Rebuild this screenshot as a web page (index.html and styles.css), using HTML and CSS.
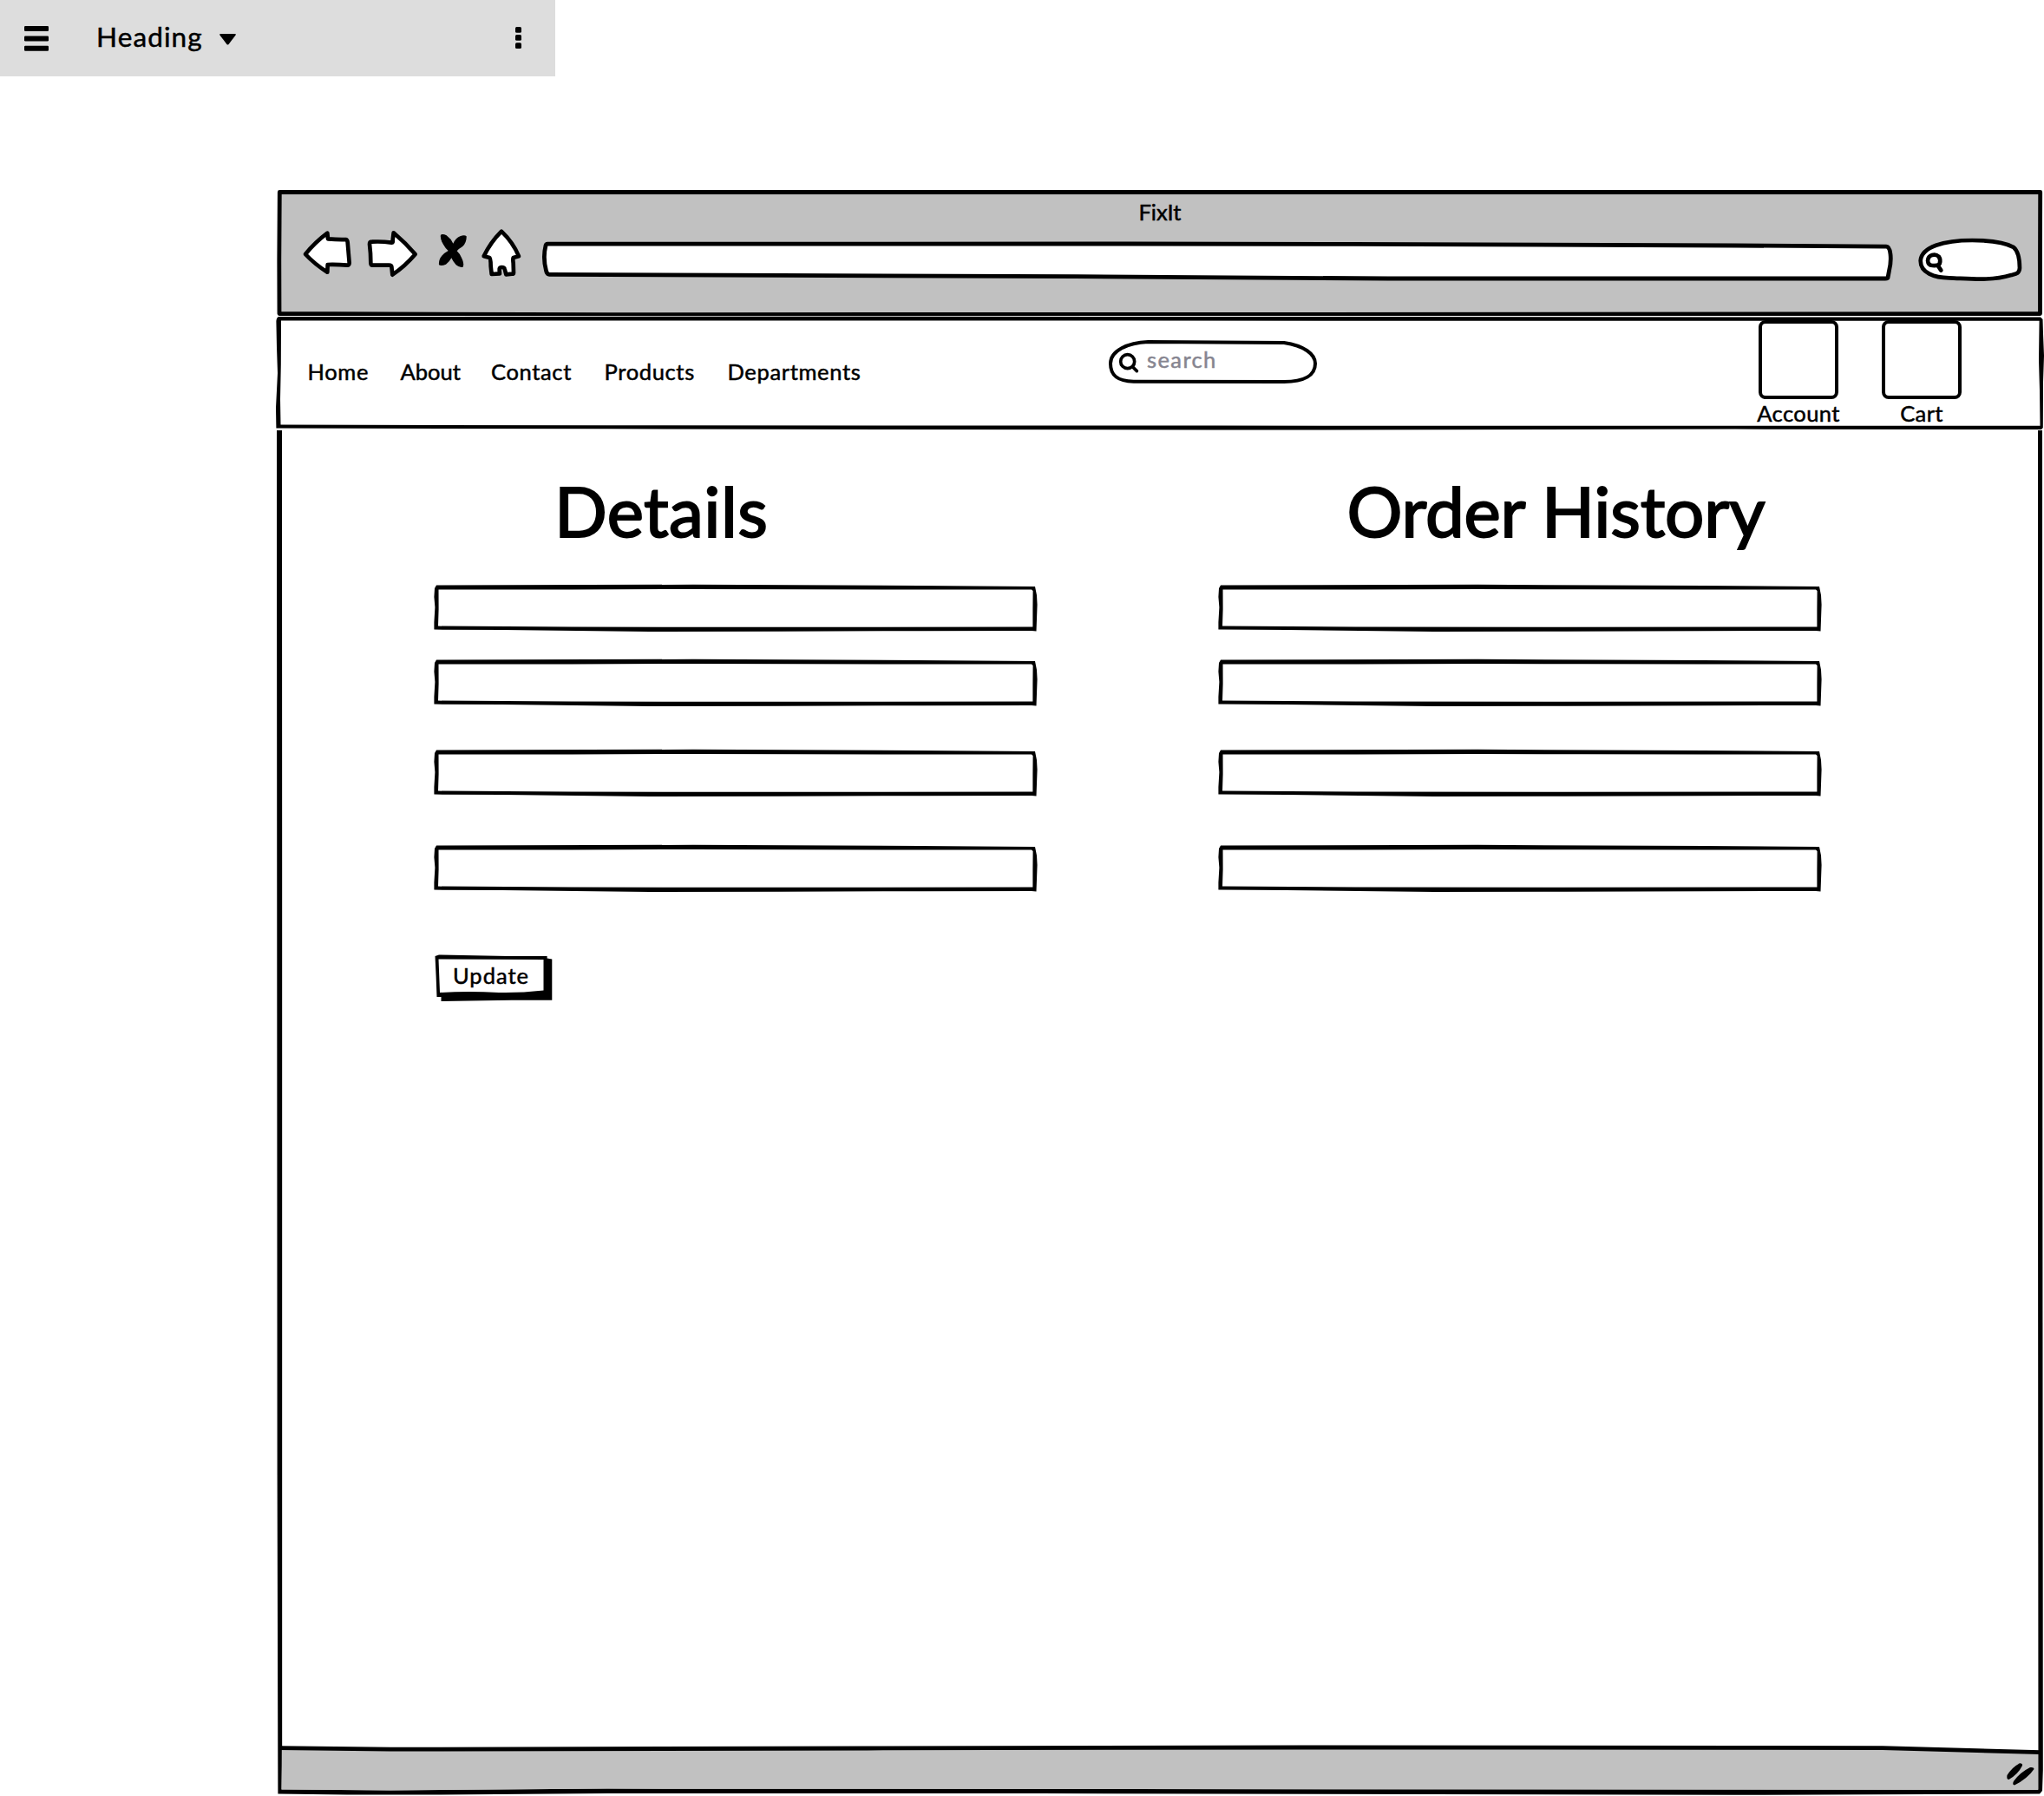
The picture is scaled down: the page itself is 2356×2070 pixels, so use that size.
FILE: index.html
```html
<!DOCTYPE html>
<html lang="en">
<head>
<meta charset="utf-8">
<title>FixIt</title>
<link rel="stylesheet" href="styles.css">
</head>
<body>
<svg class="defs" width="0" height="0">
  <symbol id="field" viewBox="0 0 698 58" preserveAspectRatio="none">
    <path class="fill" d="M4 5L694 6L693 54L4 53Z"/>
    <path d="M4 2.4L300 1.8L560 3L694 4L696 14L696.6 25L696 42L695.500 55.600L690 55L560 55.200L400 55.800L250 56L80 54L1.400 53.600L1.400 45L2.400 28L1.400 16L2 6ZM6.500 7.400L160 7.400L300 7L420 7.200L560 7.600L690 7.600L691.600 9L691.400 30L691.400 50.400L400 50.800L160 50.600L6 49.600L6.600 30Z" fill-rule="evenodd"/>
  </symbol>
</svg>

<header class="toolbar">
  <svg class="toolbar-menu" viewBox="0 0 28 29"><rect width="28" height="6" rx="1.2"/><rect y="11.4" width="28" height="6" rx="1.2"/><rect y="22.8" width="28" height="6" rx="1.2"/></svg>
  <span class="toolbar-title"><span class="t">Heading</span></span>
  <svg class="toolbar-caret" viewBox="0 0 19 13"><path d="M1 0H18Q19.4 .4 18.4 1.8L10.6 12Q9.5 13.2 8.4 12L.6 1.8Q-.4 .4 1 0Z"/></svg>
  <svg class="toolbar-more" viewBox="0 0 7 25"><rect width="7" height="6.8" rx="1.6"/><rect y="9" width="7" height="6.8" rx="1.6"/><rect y="18.2" width="7" height="6.8" rx="1.6"/></svg>
</header>

<main class="window">
  <section class="chrome stack">
    <svg class="frame" viewBox="316 216 2040 148">
      <path class="grey ink" d="M322.3 221.5H2351.7L2351.5 290V361.6L1500 362.3L700 362.6L322 361.5L321.8 300Z"/>
    </svg>
    <div class="chrome-body">
      <div class="chrome-title"><span class="t">FixIt</span></div>
      <div class="chrome-row">
        <svg class="icon back" viewBox="114 156 180 177"><path class="white line" d="M126 249Q160 207 202 176L204 196Q240 199 266 198Q271 199 272 208Q275 245 278 279Q278 288 270 287Q235 284 203 285L202 311Q160 285 126 249Z"/></svg>
        <svg class="icon forward" viewBox="336 156 180 177"><path class="white line" d="M356 206Q390 204 424 209Q430 210 428 200L431 175Q472 210 506 249Q470 291 427 320L424 292Q423 286 412 287L358 287Q352 287 352 279Q352 245 348 214Q348 206 356 206Z"/></svg>
        <svg class="icon stop" viewBox="582 156 108 177"><path d="M594 182Q600 177 614 184Q630 196 637 212Q646 193 661 187Q676 181 683 187Q684 209 669 223Q655 231 650 238Q661 248 667 263Q676 281 671 293Q660 297 647 286Q636 274 631 262Q624 276 612 284Q596 291 588 286Q586 268 598 254Q607 244 620 237Q610 229 602 214Q591 195 594 182Z"/></svg>
        <svg class="icon home" viewBox="726 156 156 177"><path class="white line" d="M804 170Q844 208 864 256L845 261Q843 265 845 280L846 314Q846 318 840 317L820 319L815 300Q814 294 804 294Q796 294 797 304L798 316L770 318L767 290Q767 262 763 261L743 256Q766 208 804 170Z"/></svg>
        <svg class="icon url" viewBox="620 268 1570 65"><path class="white ink" d="M631 281.2L1300 281L1560 281.4L2000 283L2174 284.2Q2178 284 2179 293Q2180 302 2177.5 312L2176 320Q2176 321 2173 321H1600L1240 318.7L900 317.3L634 316.3Q630.5 317 629.5 312Q625.5 297 629 283Q629.5 281.2 631 281.2Z"/></svg>
        <svg class="icon find" viewBox="630 190 366 160"><path class="white line" d="M641 272C645 225 720 202 820 202C900 202 942 214 963 226C983 243 984 285 984 298C983 317 972 318 955 322C885 343 820 335 740 332C690 332 640 315 641 272Z"/><path class="line mag heavy" d="M681 253Q694 249 704 258Q712 270 707 283Q700 291 682 289Q667 288 666 272Q667 257 681 253ZM702 291L712 306"/></svg>
      </div>
    </div>
  </section>

  <nav class="nav stack">
    <svg class="frame" viewBox="316 364 2040 132">
      <path class="white" d="M321 367H2353V492H321Z"/>
      <path d="M321 365L1000 364.7L2352 365.6L2354.5 368L2355 385L2356 410L2355 440L2354.8 493L2353 495L2000 494.6L1400 495.6L700 494.3L318.4 493.5L318 470L320 430L319 400L318.4 370Q318.8 366 321 365ZM324 369.5L323.8 420L323 460L323.5 489.6L700 490.2L1400 490.6L2351.5 490.8L2351 450L2350 415L2350.6 369.8L1300 369.6Z" fill-rule="evenodd"/>
    </svg>
    <div class="nav-body">
      <div class="links"><a class="t l1">Home</a><a class="t l2">About</a><a class="t l3">Contact</a><a class="t l4">Products</a><a class="t l5">Departments</a></div>
      <div class="search stack">
        <svg class="frame" viewBox="108 540 732 162"><path class="white line thin" d="M250 552L720 555C790 565 828 595 828 627C828 668 790 690 720 690L200 689C140 688 120 665 120 627C120 582 180 555 250 552Z"/><circle class="line mag" cx="179" cy="620" r="24"/><path class="line mag" d="M197 639L211 653"/></svg>
        <span class="t search-text">search</span>
      </div>
      <div class="shortcut account"><div class="box"></div><span class="t">Account</span></div>
      <div class="shortcut cart"><div class="box"></div><span class="t">Cart</span></div>
    </div>
  </nav>

  <section class="content stack">
    <svg class="frame" viewBox="316 496 2040 1574">
      <path class="grey" d="M322 2015H1700L2170 2014L2352 2019V2066H322Z"/>
      <path d="M319 496H325L325.4 1000L325.4 2014L324.500 2062.600L330 2062.6L450 2063.4L700 2061.6L1300 2062L2349.5 2062.8L2349 1300L2349 496H2354L2354.3 1300L2354.8 2040L2354 2064L2351 2067.6L2000 2068.8L1200 2067L700 2067L480 2068.6L400 2068.6L320.4 2067.4L319.6 1700Z"/>
      <path class="white" d="M325.400 496H2349V2017.500L2170 2012L1500 2012L1000 2012.600L450 2013.800L325.400 2012.400Z"/>
      <path class="grey" d="M324.800 2017L450 2018.600L1000 2017.400L2170 2017L2349 2022V2063L1300 2062L700 2061.600L450 2063.400L324.500 2062.600Z"/>
      <path class="ink open" d="M322 2014.6L450 2016.2L1000 2015L1500 2014L2000 2014.4L2170 2014.6Q2260 2017 2352 2019.6"/>
      <path d="M2328 2032.2Q2331.500 2032 2331 2035Q2326 2045 2315.500 2051Q2312.500 2051 2313.500 2046Q2319 2037 2328 2032.200ZM2340 2037Q2344.500 2036.500 2344.500 2039Q2337 2050 2322 2057.500Q2319 2057 2321 2053Q2328 2043 2340 2037Z"/>
    </svg>
    <div class="columns">
      <div class="column">
        <h1 class="t details">Details</h1>
        <svg class="field"><use href="#field"/></svg>
        <svg class="field"><use href="#field"/></svg>
        <svg class="field"><use href="#field"/></svg>
        <svg class="field"><use href="#field"/></svg>
        <div class="button stack">
          <svg class="frame" viewBox="499 1098 140 58"><path d="M501.500 1102L506 1100.400L586 1102L630.600 1102V1104.500L636.300 1105.500V1152.700L590 1152.700L508.500 1154V1149H503.500L502.600 1125Z"/><path class="white" d="M505.500 1105.500L626.500 1106V1141.500Q600 1144.500 575 1144Q540 1142 507 1144Z"/></svg>
          <span class="t update">Update</span>
        </div>
      </div>
      <div class="column">
        <h1 class="t orders">Order History</h1>
        <svg class="field"><use href="#field"/></svg>
        <svg class="field"><use href="#field"/></svg>
        <svg class="field"><use href="#field"/></svg>
        <svg class="field"><use href="#field"/></svg>
      </div>
    </div>
  </section>
</main>
</body>
</html>
```
FILE: styles.css
```css
* { box-sizing: border-box; }
body {
  margin: 0;
  background: #fff;
  color: #000;
  font-family: Lato, "Open Sans", sans-serif;
  font-size: 25.5px;
  line-height: 30px;
}
svg { display: block; flex: none; }
.defs { position: absolute; }
.t { white-space: nowrap; -webkit-text-stroke: 0.5px currentColor; }

.stack { display: grid; }
.stack > * { grid-area: 1 / 1; }
.frame { width: 100%; height: 100%; }
.grey { fill: #c1c1c1; }
.white, .fill { fill: #fff; }
.ink { stroke: #000; stroke-width: 4.8; stroke-linejoin: round; }
.open { fill: none; }
.line { stroke: #000; stroke-width: 14; stroke-linejoin: round; stroke-linecap: round; }
.thin { stroke-width: 12; }
.mag { fill: none; stroke-width: 11; }
.heavy { stroke-width: 14; }

.toolbar {
  display: flex;
  align-items: flex-start;
  width: 640px;
  height: 88px;
  padding: 0 39px 0 28px;
  background: #ddd;
}
.toolbar-menu { width: 28px; height: 29px; margin-top: 30px; overflow: visible; }
.toolbar-title { width: 142px; margin: 23px 0 0 55px; font-size: 31.5px; line-height: 38px; letter-spacing: 1.1px; }
.toolbar-caret { width: 19px; height: 13px; margin-top: 39px; }
.toolbar-more { width: 7px; height: 25px; margin: 31px 0 0 auto; }

.window { width: 2040px; margin: 128px 0 0 316px; }

.chrome { height: 148px; }
.chrome-title { padding-top: 13px; height: 52px; text-align: center; padding-left: 2px; }
.chrome-row { display: flex; align-items: flex-start; }
.icon { overflow: visible; }
.back { width: 60px; height: 59px; margin: -6px 0 0 32px; }
.forward { width: 60px; height: 59px; margin: -6px 0 0 14px; }
.stop { width: 36px; height: 59px; margin: -6px 0 0 22px; }
.home { width: 52px; height: 59px; margin: -6px 0 0 12px; }
.url { width: 1570px; height: 65px; margin-left: 16px; }
.find { width: 122px; height: 53.3px; margin: 5.3px 0 0 20px; }

.nav { height: 132px; }
.nav-body { display: flex; align-items: flex-start; }
.links { display: grid; grid-template-columns: 107px 104.5px 130.500px 142px 158.500px; margin: 49px 0 0 38.500px; letter-spacing: .65px; }
.l2 { letter-spacing: 0; }
.search { width: 244px; height: 54px; margin: 26px 0 0 279px; }
.search-text { padding: 9px 0 0 46px; color: #868590; letter-spacing: 1.4px; }
.shortcut { display: flex; flex-direction: column; align-items: center; width: 92px; margin-top: 5px; letter-spacing: .4px; }
.box { width: 92px; height: 91px; border: 4px solid #000; border-radius: 8px; margin-bottom: 1px; }
.account { margin-left: 507px; }
.cart { margin-left: 50px; }

.content { height: 1574px; }
.columns { display: flex; gap: 206px; padding: 43px 0 0 183px; }
.column { width: 698px; }
h1 { margin: 0 0 35px; font-size: 80px; font-weight: 400; line-height: 98px; }
h1.t { -webkit-text-stroke: 2px #000; }
.details { padding-left: 140px; letter-spacing: .4px; }
.orders { padding-left: 149.500px; letter-spacing: -.2px; }
.field { width: 698px; height: 58px; margin-bottom: 28px; }
.field:nth-of-type(2) { margin-bottom: 46px; }
.field:nth-of-type(3) { margin-bottom: 52px; }
.field:nth-of-type(4) { margin-bottom: 68px; }
.button { width: 140px; height: 58px; }
.update { padding: 11px 0 0 23px; letter-spacing: 1px; }
```
